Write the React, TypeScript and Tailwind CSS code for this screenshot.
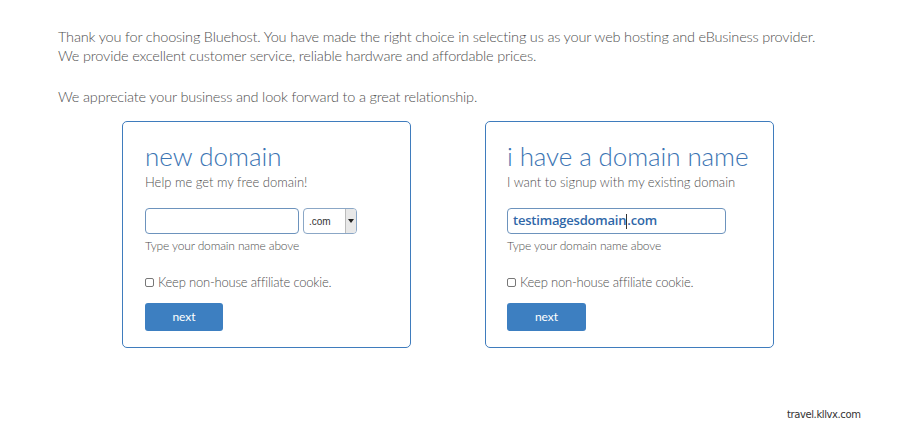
export default function App() {
  return (
    <div className="relative w-[900px] h-[423px] bg-white font-['Lato','Open_Sans',sans-serif] text-[#505050]">
      <div className="pl-[58px] pt-[27px] text-[14.5px] font-light leading-[19px] tracking-[-0.18px]">
        <p>Thank you for choosing Bluehost. You have made the right choice in selecting us as your web hosting and eBusiness provider.</p>
        <p>We provide excellent customer service, reliable hardware and affordable prices.</p>
        <p className="mt-[22px]">We appreciate your business and look forward to a great relationship.</p>
      </div>

      <div className="flex gap-[74px] pl-[122px] mt-[15px]">
        {/* new domain */}
        <div className="w-[289px] h-[227px] border border-[#3f7cbd] rounded-[5px] pl-[22px] pt-[18px]">
          <h2 className="text-[26px] font-light text-[#3b74b3] leading-[32px]">new domain</h2>
          <p className="text-[13px] font-light mt-[1px] leading-[18px]">Help me get my free domain!</p>
          <div className="flex gap-[4px] mt-[17px]">
            <div className="w-[154px] h-[26px] border border-[#6d93bd] rounded-[4px]" />
            <div className="w-[54px] h-[26px] border border-[#8ba7c6] rounded-[4px] flex items-center justify-between pl-[5px] overflow-hidden">
              <span className="text-[10px] font-['Liberation_Sans',sans-serif] text-[#333]">.com</span>
              <span className="w-[11px] h-full bg-[#e8e8e8] border-l border-[#bbb] flex items-center justify-center">
                <span className="w-0 h-0 border-l-[3px] border-r-[3px] border-t-[4px] border-l-transparent border-r-transparent border-t-[#222]" />
              </span>
            </div>
          </div>
          <p className="text-[12px] font-light mt-[4px] leading-[16px] tracking-[-0.15px]">Type your domain name above</p>
          <label className="flex items-center gap-[4px] mt-[19px] text-[13px] font-light leading-[18px] tracking-[-0.2px]">
            <span className="w-[9px] h-[9px] border border-[#777] rounded-[2px]" />
            Keep non-house affiliate cookie.
          </label>
          <button className="mt-[12px] w-[78px] h-[28px] bg-[#3d7fc1] rounded-[3px] text-white text-[12px]">next</button>
        </div>

        {/* existing domain */}
        <div className="w-[289px] h-[227px] border border-[#3f7cbd] rounded-[5px] pl-[21px] pt-[18px]">
          <h2 className="text-[26px] font-light text-[#3b74b3] leading-[32px] tracking-[-0.1px]">i have a domain name</h2>
          <p className="text-[13px] font-light mt-[1px] leading-[18px]">I want to signup with my existing domain</p>
          <div className="mt-[17px] w-[219px] h-[26px] border border-[#6d93bd] rounded-[4px] flex items-center pl-[5px]">
            <span className="text-[13px] font-semibold text-[#2f67a8] font-['Open_Sans',sans-serif] tracking-[-0.2px]">testimagesdomain</span>
            <span className="w-px h-[15px] bg-[#333]" />
            <span className="text-[13px] font-semibold text-[#2f67a8] font-['Open_Sans',sans-serif] tracking-[-0.2px]">.com</span>
          </div>
          <p className="text-[12px] font-light mt-[4px] leading-[16px] tracking-[-0.15px]">Type your domain name above</p>
          <label className="flex items-center gap-[4px] mt-[19px] text-[13px] font-light leading-[18px] tracking-[-0.2px]">
            <span className="w-[9px] h-[9px] border border-[#777] rounded-[2px]" />
            Keep non-house affiliate cookie.
          </label>
          <button className="mt-[12px] w-[79px] h-[28px] bg-[#3d7fc1] rounded-[3px] text-white text-[12px]">next</button>
        </div>
      </div>

      <div className="absolute left-[787px] top-[407px] text-[10px] text-[#333] font-['DejaVu_Sans',sans-serif] tracking-[-0.4px]">travel.kllvx.com</div>
    </div>
  );
}
